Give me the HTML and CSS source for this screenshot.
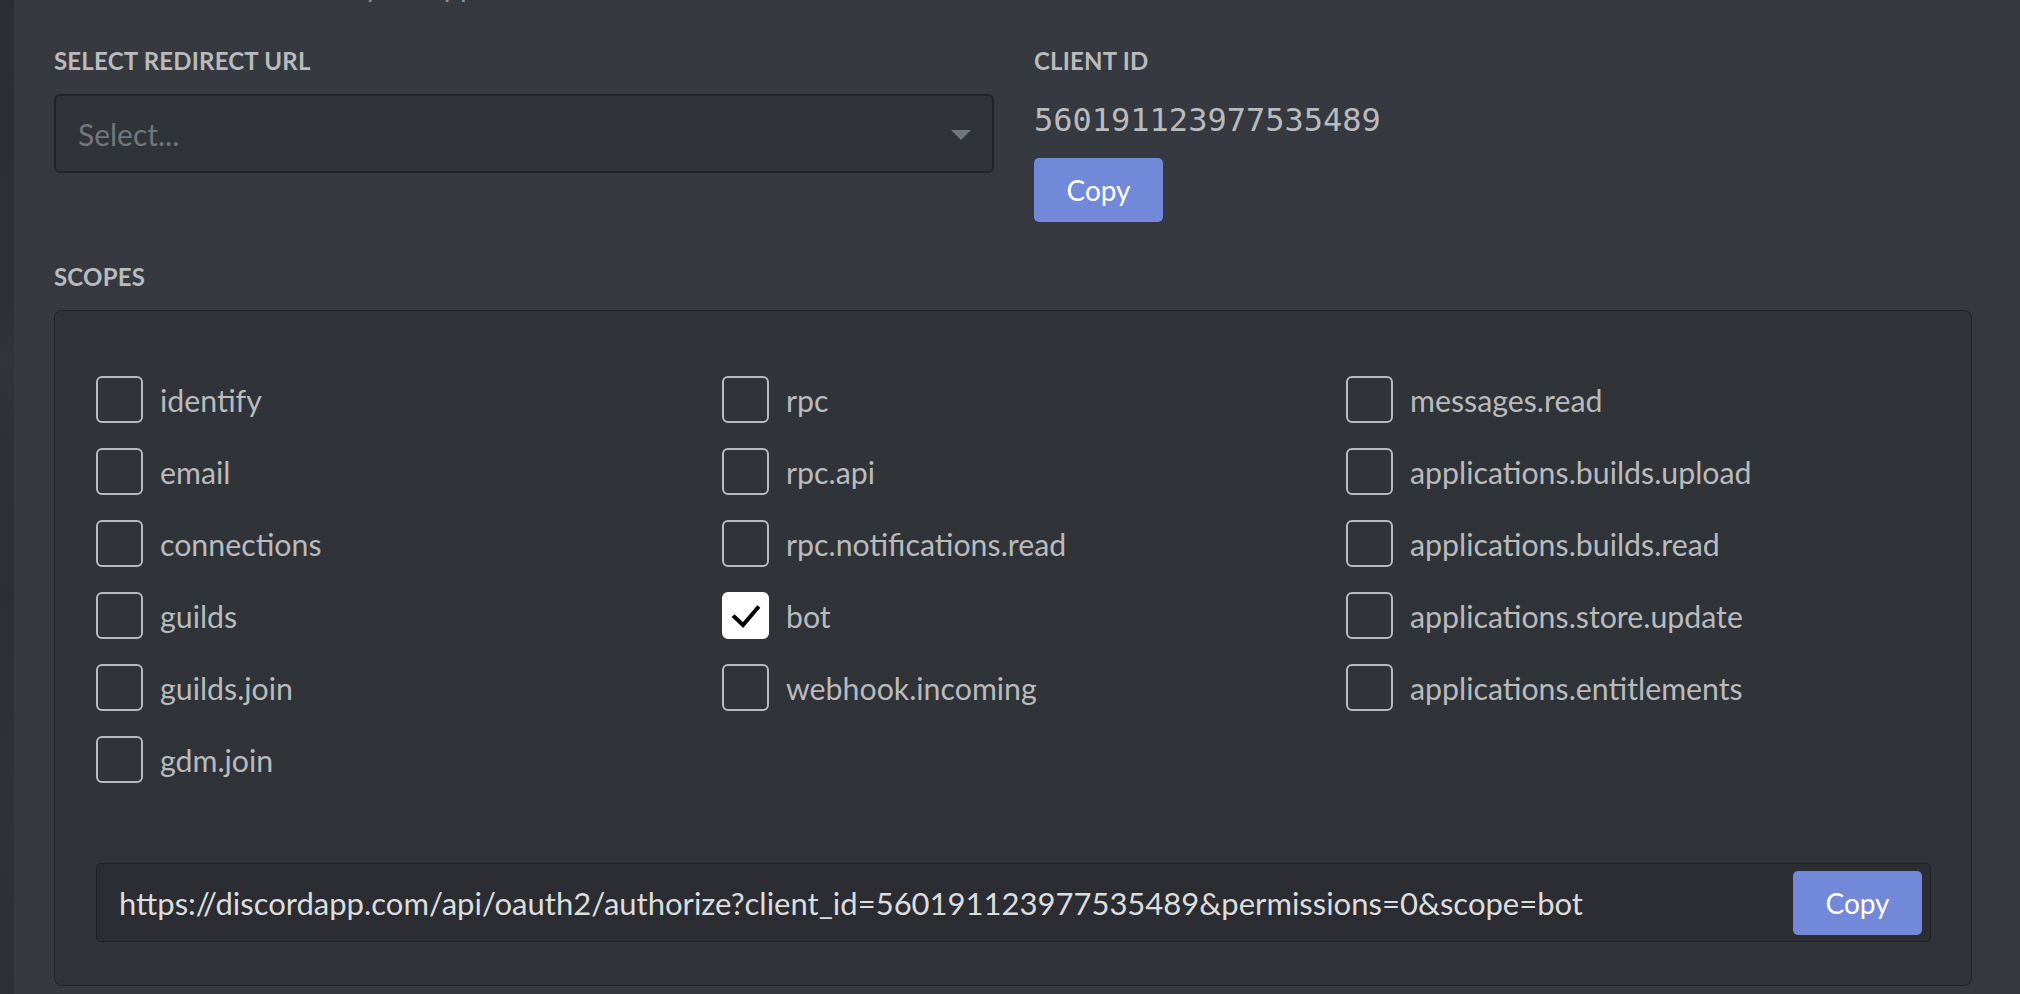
FILE: index.html
```html
<!DOCTYPE html>
<html lang="en">
<head>
<meta charset="utf-8">
<title>OAuth2 URL Generator</title>
<link rel="stylesheet" href="styles.css">
</head>
<body>
<div class="page">
  <div class="edge"></div>
  <main class="main">
    <p class="intro">Generate a link to invite your application to a server.</p>
    <div class="top-row">
      <section class="field redirect">
        <h5 class="label">Select redirect URL</h5>
        <div class="select">
          <span class="placeholder">Select...</span>
          <span class="arrow"></span>
        </div>
      </section>
      <section class="field client">
        <h5 class="label">Client ID</h5>
        <div class="client-id">560191123977535489</div>
        <button class="btn">Copy</button>
      </section>
    </div>
    <h5 class="label scopes-label">Scopes</h5>
    <div class="scopes-box">
      <div class="scopes-grid">
        <label class="scope"><span class="check"></span><span class="scope-name">identify</span></label>
        <label class="scope"><span class="check"></span><span class="scope-name">email</span></label>
        <label class="scope"><span class="check"></span><span class="scope-name">connections</span></label>
        <label class="scope"><span class="check"></span><span class="scope-name">guilds</span></label>
        <label class="scope"><span class="check"></span><span class="scope-name">guilds.join</span></label>
        <label class="scope"><span class="check"></span><span class="scope-name">gdm.join</span></label>

        <label class="scope"><span class="check"></span><span class="scope-name">rpc</span></label>
        <label class="scope"><span class="check"></span><span class="scope-name">rpc.api</span></label>
        <label class="scope"><span class="check"></span><span class="scope-name">rpc.notifications.read</span></label>
        <label class="scope"><span class="check checked"><svg viewBox="0 0 47 47" width="47" height="47"><path d="M12.5 25 L21 33 L35.5 16" fill="none" stroke="#000" stroke-width="4" stroke-linecap="square" stroke-linejoin="miter"/></svg></span><span class="scope-name">bot</span></label>
        <label class="scope"><span class="check"></span><span class="scope-name">webhook.incoming</span></label>
        <div class="scope-empty"></div>

        <label class="scope"><span class="check"></span><span class="scope-name">messages.read</span></label>
        <label class="scope"><span class="check"></span><span class="scope-name">applications.builds.upload</span></label>
        <label class="scope"><span class="check"></span><span class="scope-name">applications.builds.read</span></label>
        <label class="scope"><span class="check"></span><span class="scope-name">applications.store.update</span></label>
        <label class="scope"><span class="check"></span><span class="scope-name">applications.entitlements</span></label>
        <div class="scope-empty"></div>
      </div>
      <div class="url-bar">
        <span class="url-text">https://discordapp.com/api/oauth2/authorize?client_id=560191123977535489&amp;permissions=0&amp;scope=bot</span>
        <button class="btn">Copy</button>
      </div>
    </div>
  </main>
</div>
</body>
</html>
```

FILE: styles.css
```css
* { box-sizing: border-box; }

html, body {
  margin: 0;
  padding: 0;
  height: 100%;
}

body {
  background: #36393f;
  font-family: Lato, "Open Sans", "Liberation Sans", sans-serif;
  color: #b9bbbe;
  overflow: hidden;
}

.page {
  display: flex;
  height: 994px;
}

.edge {
  width: 14px;
  flex: none;
  background:
    linear-gradient(180deg, #2c2d31 0%, #2e2f33 30%, #333438 36%, #2f3034 45%, #2d2e32 60%, #313236 80%, #2e2f33 100%);
}

.main {
  flex: 1;
  padding: 0 48px 0 40px;
}

.intro {
  margin: -31px 0 0 0;
  font-size: 29px;
  line-height: 34px;
  color: #8e9297;
  white-space: nowrap;
}

.top-row {
  display: flex;
  gap: 40px;
  margin-top: 43px;
}

.redirect {
  width: 940px;
}

.label {
  margin: 0;
  font-size: 24px;
  line-height: 30px;
  font-weight: 700;
  text-transform: uppercase;
  letter-spacing: 0.2px;
  color: #b9bbbe;
}

.select {
  margin-top: 18px;
  height: 79px;
  display: flex;
  align-items: center;
  justify-content: space-between;
  padding: 0 21px 0 22px;
  background: rgba(0, 0, 0, 0.1);
  border: 2px solid rgba(0, 0, 0, 0.3);
  border-radius: 6px;
}

.placeholder {
  font-size: 30px;
  color: #72767d;
}

.arrow {
  width: 0;
  height: 0;
  border-left: 10px solid transparent;
  border-right: 10px solid transparent;
  border-top: 10px solid #72767d;
  margin-top: 3px;
}

.client {
  display: flex;
  flex-direction: column;
  align-items: flex-start;
}

.client-id {
  margin-top: 24px;
  font-family: "DejaVu Sans Mono", "Liberation Mono", monospace;
  font-size: 32px;
  line-height: 40px;
  color: #b9bbbe;
}

.btn {
  width: 129px;
  height: 64px;
  border: 0;
  border-radius: 5px;
  background: #7289da;
  color: #fff;
  font-family: Lato, "Open Sans", "Liberation Sans", sans-serif;
  font-size: 28px;
  padding: 0;
  flex: none;
}

.client .btn {
  margin-top: 18px;
}

.scopes-label {
  margin-top: 40px;
}

.scopes-box {
  margin-top: 18px;
  height: 676px;
  background: rgba(0, 0, 0, 0.1);
  border: 1px solid rgba(0, 0, 0, 0.3);
  border-radius: 8px;
  padding: 65px 40px 0 41px;
}

.scopes-grid {
  display: grid;
  grid-template-columns: 626px 624px 1fr;
  grid-template-rows: repeat(6, 47px);
  grid-auto-flow: column;
  row-gap: 25px;
  margin-right: -40px;
}

.scope {
  display: flex;
  align-items: center;
  gap: 17px;
}

.check {
  width: 47px;
  height: 47px;
  flex: none;
  border: 2px solid #b9bbbe;
  border-radius: 6px;
  display: flex;
}

.check.checked {
  background: #fff;
  border-color: #fff;
}

.check.checked svg {
  margin: -2px;
}

.scope-name {
  font-size: 30.3px;
  color: #b9bbbe;
  white-space: nowrap;
}

.url-bar {
  margin-top: 80px;
  height: 79px;
  display: flex;
  align-items: center;
  justify-content: space-between;
  padding: 0 8px 0 22px;
  background: rgba(0, 0, 0, 0.1);
  border: 1px solid rgba(0, 0, 0, 0.3);
  border-radius: 5px;
}

.url-text {
  font-size: 31px;
  color: #dcddde;
  white-space: nowrap;
}
```
